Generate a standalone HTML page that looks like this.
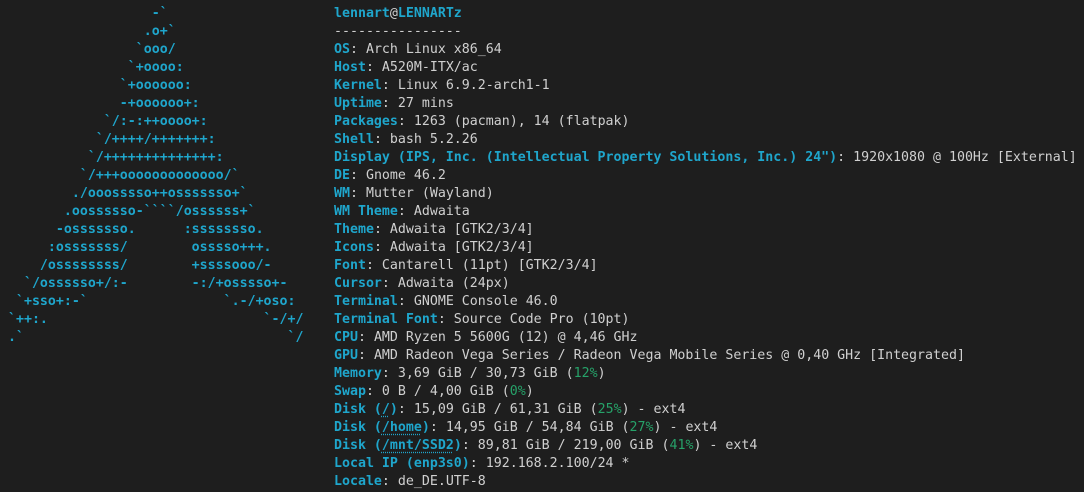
<!DOCTYPE html>
<html><head><meta charset="utf-8"><style>
html,body{margin:0;padding:0;background:#1e1e1e;width:1084px;height:492px;overflow:hidden}
pre{position:absolute;margin:0;font-family:"DejaVu Sans Mono","Liberation Mono",monospace;font-size:13.28px;line-height:18px;color:#d0d0d0}
.c{color:#1fa6cc}
b{color:#1fa6cc;font-weight:bold}
.g{color:#26a269}
u{text-decoration:underline dotted;text-underline-offset:3px}
</style></head><body>
<pre class="c" style="left:0;top:5px;font-weight:bold">                   -&#96;
                  .o+&#96;
                 &#96;ooo/
                &#96;+oooo:
               &#96;+oooooo:
               -+oooooo+:
             &#96;/:-:++oooo+:
            &#96;/++++/+++++++:
           &#96;/++++++++++++++:
          &#96;/+++ooooooooooooo/&#96;
         ./ooosssso++osssssso+&#96;
        .oossssso-&#96;&#96;&#96;&#96;/ossssss+&#96;
       -osssssso.      :ssssssso.
      :osssssss/        osssso+++.
     /ossssssss/        +ssssooo/-
   &#96;/ossssso+/:-        -:/+osssso+-
  &#96;+sso+:-&#96;                 &#96;.-/+oso:
 &#96;++:.                           &#96;-/+/
 .&#96;                                 &#96;/</pre>
<pre style="left:334px;top:5px"><b>lennart</b>@<b>LENNARTz</b>
----------------
<b>OS</b>: Arch Linux x86_64
<b>Host</b>: A520M-ITX/ac
<b>Kernel</b>: Linux 6.9.2-arch1-1
<b>Uptime</b>: 27 mins
<b>Packages</b>: 1263 (pacman), 14 (flatpak)
<b>Shell</b>: bash 5.2.26
<b>Display (IPS, Inc. (Intellectual Property Solutions, Inc.) 24")</b>: 1920x1080 @ 100Hz [External]
<b>DE</b>: Gnome 46.2
<b>WM</b>: Mutter (Wayland)
<b>WM Theme</b>: Adwaita
<b>Theme</b>: Adwaita [GTK2/3/4]
<b>Icons</b>: Adwaita [GTK2/3/4]
<b>Font</b>: Cantarell (11pt) [GTK2/3/4]
<b>Cursor</b>: Adwaita (24px)
<b>Terminal</b>: GNOME Console 46.0
<b>Terminal Font</b>: Source Code Pro (10pt)
<b>CPU</b>: AMD Ryzen 5 5600G (12) @ 4,46 GHz
<b>GPU</b>: AMD Radeon Vega Series / Radeon Vega Mobile Series @ 0,40 GHz [Integrated]
<b>Memory</b>: 3,69 GiB / 30,73 GiB (<span class="g">12%</span>)
<b>Swap</b>: 0 B / 4,00 GiB (<span class="g">0%</span>)
<b>Disk (<u>/</u>)</b>: 15,09 GiB / 61,31 GiB (<span class="g">25%</span>) - ext4
<b>Disk (<u>/home</u>)</b>: 14,95 GiB / 54,84 GiB (<span class="g">27%</span>) - ext4
<b>Disk (<u>/mnt/SSD2</u>)</b>: 89,81 GiB / 219,00 GiB (<span class="g">41%</span>) - ext4
<b>Local IP (enp3s0)</b>: 192.168.2.100/24 *
<b>Locale</b>: de_DE.UTF-8</pre>
</body></html>
